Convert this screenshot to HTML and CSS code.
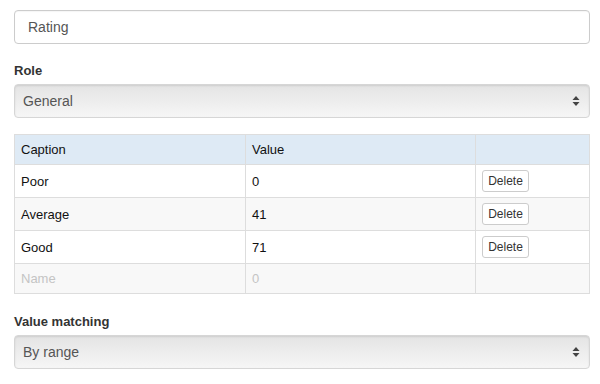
FILE: index.html
```html
<!DOCTYPE html>
<html>
<head>
<meta charset="utf-8">
<link rel="stylesheet" href="styles.css">
</head>
<body>
<div class="form">
  <div class="input">Rating</div>
  <div class="label label-role">Role</div>
  <div class="select"><span>General</span><svg class="arrows" width="8" height="12" viewBox="0 0 8 12"><path d="M4 1 L7.5 5 L0.5 5 Z" fill="#444"/><path d="M4 11 L7.5 7 L0.5 7 Z" fill="#444"/></svg></div>
  <table class="grid">
    <thead>
      <tr><th class="c1">Caption</th><th class="c2">Value</th><th class="c3"></th></tr>
    </thead>
    <tbody>
      <tr><td>Poor</td><td>0</td><td><button class="btn">Delete</button></td></tr>
      <tr class="alt"><td>Average</td><td>41</td><td><button class="btn">Delete</button></td></tr>
      <tr><td>Good</td><td>71</td><td><button class="btn">Delete</button></td></tr>
      <tr class="alt new"><td class="ph">Name</td><td class="ph">0</td><td></td></tr>
    </tbody>
  </table>
  <div class="label label-match">Value matching</div>
  <div class="select"><span>By range</span><svg class="arrows" width="8" height="12" viewBox="0 0 8 12"><path d="M4 1 L7.5 5 L0.5 5 Z" fill="#444"/><path d="M4 11 L7.5 7 L0.5 7 Z" fill="#444"/></svg></div>
</div>
</body>
</html>
```
FILE: styles.css
```css
html, body {
  margin: 0;
  padding: 0;
  background: #fff;
}
body {
  font-family: "Liberation Sans", Arial, sans-serif;
  color: #333;
}
.form {
  padding: 10px 10px 0 14px;
  display: flex;
  flex-direction: column;
}
.input {
  box-sizing: border-box;
  height: 34px;
  border: 1px solid #ccc;
  border-radius: 4px;
  padding: 0 13px;
  display: flex;
  align-items: center;
  font-size: 14px;
  color: #555;
  box-shadow: inset 0 1px 1px rgba(0,0,0,0.04);
}
.label {
  font-weight: bold;
  font-size: 13px;
  color: #333;
  line-height: 16px;
}
.label-role {
  margin-top: 19px;
  margin-bottom: 5px;
}
.label-match {
  margin-top: 20px;
  margin-bottom: 5px;
}
.select {
  box-sizing: border-box;
  height: 34px;
  border: 1px solid #d6d6d6;
  border-radius: 4px;
  padding: 0 9px 0 8px;
  display: flex;
  align-items: center;
  justify-content: space-between;
  font-size: 14px;
  color: #555;
  background: linear-gradient(#e4e4e4, #f6f6f6);
  box-shadow: inset 0 1px 2px rgba(0,0,0,0.1);
}
.arrows {
  display: block;
}
.grid {
  margin-top: 16px;
  border-collapse: collapse;
  width: 576px;
  font-size: 13px;
  color: #111;
  table-layout: fixed;
}
.grid th, .grid td {
  border: 1px solid #ddd;
  text-align: left;
  padding: 0 6px;
  font-weight: normal;
}
.grid th {
  background: #deeaf5;
  height: 29px;
}
.c1 { width: 218px; }
.c2 { width: 217px; }
.grid td {
  height: 32px;
}
.grid tr.alt td {
  background: #f8f8f8;
}
.grid tr.new td {
  height: 29px;
}
.grid td.ph {
  color: #c4c4c4;
}
.btn {
  font-family: "Liberation Sans", Arial, sans-serif;
  font-size: 12px;
  color: #333;
  background: #fff;
  border: 1px solid #ccc;
  border-radius: 3px;
  height: 22px;
  width: 47px;
  padding: 0;
  display: block;
}
```
